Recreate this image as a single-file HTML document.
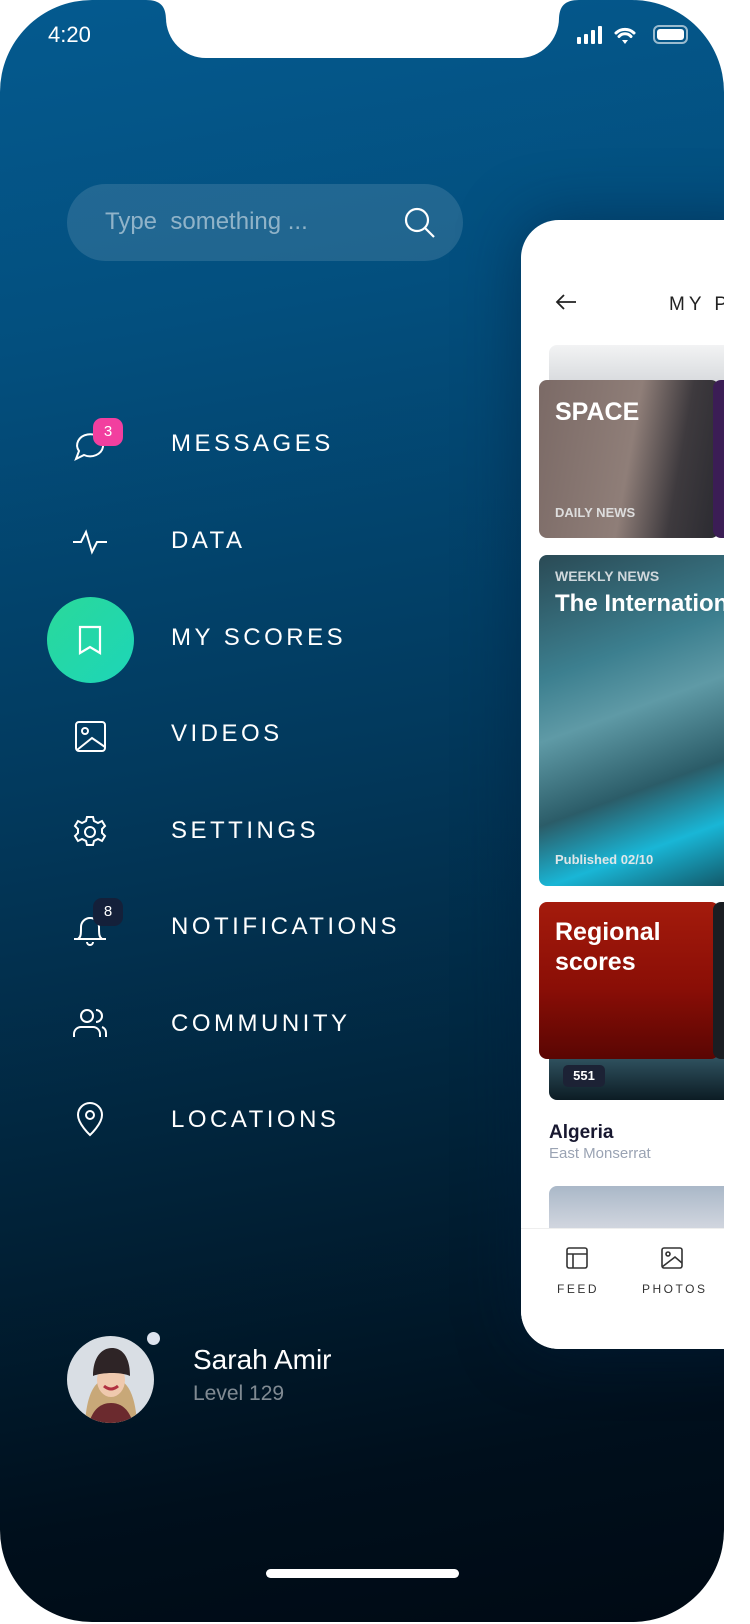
<!DOCTYPE html>
<html><head><meta charset="utf-8"><style>
*{margin:0;padding:0;box-sizing:border-box}
body{width:750px;height:1624px;background:#fff;position:relative;overflow:hidden;font-family:"Liberation Sans",sans-serif}
.phone{position:absolute;left:0;top:0;width:724px;height:1622px;border-radius:92px;overflow:hidden;background:linear-gradient(170deg,#045a8f 0%,#034f7e 20%,#023a5e 45%,#012238 70%,#000f1c 88%,#000a14 100%)}
.notch{position:absolute;left:166px;top:-1px;width:393px;height:59px;background:#fff;border-radius:0 0 40px 40px}
.time{position:absolute;left:48px;top:22px;color:#fff;font-size:22px}
.search{position:absolute;left:67px;top:184px;width:396px;height:77px;border-radius:39px;background:rgba(255,255,255,0.12)}
.search span{position:absolute;left:38px;top:24px;color:rgba(255,255,255,0.5);font-size:24px}
.item{position:absolute;left:171px;color:#fff;font-size:24px;letter-spacing:3.5px}
.ic{position:absolute;left:72px;width:36px;height:36px}
.badge{position:absolute;width:30px;height:28px;border-radius:9px;color:#fff;font-size:15px;text-align:center;line-height:28px}
.panel{position:absolute;left:521px;top:220px;width:260px;height:1129px;background:#fff;border-radius:38px;box-shadow:0 0 60px rgba(0,30,60,0.5);overflow:hidden}
.card{position:absolute;border-radius:8px;overflow:hidden}
.ct{position:absolute;color:#fff;font-weight:bold}
</style></head><body>
<div class="phone">
<div class="notch"></div>
<svg style="position:absolute;left:146px;top:0" width="433" height="20" viewBox="0 0 433 20"><path d="M0 0h20v20C20 6 14 0 0 0z" fill="#fff"/><path d="M433 0h-20v20C413 6 419 0 433 0z" fill="#fff"/></svg>
<div class="time">4:20</div>
<svg style="position:absolute;left:577px;top:24px" width="112" height="22" viewBox="0 0 112 22">
<rect x="0" y="13" width="4" height="7" rx="1" fill="#fff"/><rect x="7" y="10" width="4" height="10" rx="1" fill="#fff"/><rect x="14" y="6" width="4" height="14" rx="1" fill="#fff"/><rect x="21" y="2" width="4" height="18" rx="1" fill="#fff"/>
<path d="M39 9a13 13 0 0 1 18 0M42 12.5a8 8 0 0 1 12 0" stroke="#fff" stroke-width="3" fill="none" stroke-linecap="round"/><path d="M45 16l3 4 3-4z" fill="#fff"/>
<rect x="77" y="2" width="33" height="17" rx="5" fill="none" stroke="rgba(255,255,255,0.6)" stroke-width="2"/><rect x="80" y="5" width="27" height="11" rx="3" fill="#fff"/>
</svg>
<div class="search"><span>Type&nbsp; something ...</span>
<svg style="position:absolute;left:336px;top:22px" width="34" height="34" viewBox="0 0 34 34" fill="none" stroke="#fff" stroke-width="2.2"><circle cx="14" cy="14" r="11"/><path d="M22 22l9 9"/></svg></div>

<svg class="ic" style="top:427px" viewBox="0 0 36 36" fill="none" stroke="#fff" stroke-width="2"><path d="M4 32l3-8a13 11 0 1 1 5 4z"/></svg>
<div class="badge" style="left:93px;top:418px;background:#f23f9f">3</div>
<div class="item" style="top:430px">MESSAGES</div>

<svg class="ic" style="top:524px" viewBox="0 0 36 36" fill="none" stroke="#fff" stroke-width="2"><path d="M1 18h8l5-10 6 20 5-10h10"/></svg>
<div class="item" style="top:527px">DATA</div>

<div style="position:absolute;left:47px;top:597px;width:87px;height:86px;border-radius:50%;background:linear-gradient(135deg,#2ad89a,#1dd6b8)"></div>
<svg class="ic" style="top:622px" viewBox="0 0 36 36" fill="none" stroke="#fff" stroke-width="2.2"><path d="M8 5h20v26l-10-6-10 6z"/></svg>
<div class="item" style="top:624px">MY SCORES</div>

<svg class="ic" style="top:718px" viewBox="0 0 36 36" fill="none" stroke="#fff" stroke-width="2"><rect x="4" y="4" width="29" height="29" rx="3"/><circle cx="13" cy="13" r="3"/><path d="M5 32l15-12 13 9"/></svg>
<div class="item" style="top:720px">VIDEOS</div>

<svg class="ic" style="top:814px" viewBox="0 0 36 36" fill="none" stroke="#fff" stroke-width="2"><circle cx="18" cy="18" r="5"/><path d="M15 3h6l1 4 4 2 4-2 3 5-3 3v4l3 3-3 5-4-2-4 2-1 4h-6l-1-4-4-2-4 2-3-5 3-3v-4l-3-3 3-5 4 2 4-2z"/></svg>
<div class="item" style="top:817px">SETTINGS</div>

<svg class="ic" style="top:910px" viewBox="0 0 36 36" fill="none" stroke="#fff" stroke-width="2"><path d="M2 29h32M6 29c3-2 3-5 3-12a9 9 0 0 1 18 0c0 7 0 10 3 12M15 32a3 3 0 0 0 6 0"/></svg>
<div class="badge" style="left:93px;top:898px;background:#14203a">8</div>
<div class="item" style="top:913px">NOTIFICATIONS</div>

<svg class="ic" style="top:1006px" viewBox="0 0 36 36" fill="none" stroke="#fff" stroke-width="2"><circle cx="15" cy="10" r="6"/><path d="M2 31v-3a7 7 0 0 1 7-7h12a7 7 0 0 1 7 7v3M24 4a6 6 0 0 1 0 12M30 21a6 6 0 0 1 4 6v4"/></svg>
<div class="item" style="top:1010px">COMMUNITY</div>

<svg class="ic" style="top:1101px" viewBox="0 0 36 36" fill="none" stroke="#fff" stroke-width="2"><path d="M18 34s-12-11-12-20a12 12 0 0 1 24 0c0 9-12 20-12 20z"/><circle cx="18" cy="14" r="4"/></svg>
<div class="item" style="top:1106px">LOCATIONS</div>

<svg style="position:absolute;left:67px;top:1336px" width="87" height="87" viewBox="0 0 87 87">
<defs><clipPath id="c"><circle cx="43.5" cy="43.5" r="43.5"/></clipPath></defs>
<g clip-path="url(#c)"><rect width="87" height="87" fill="#d9dee4"/>
<path d="M18 87c2-30 10-45 26-45s24 15 26 45z" fill="#c8a878"/>
<path d="M22 87c4-14 12-20 22-20s18 6 22 20z" fill="#6b2a2e"/>
<ellipse cx="44" cy="44" rx="14" ry="17" fill="#efc9ae"/>
<path d="M26 40c0-18 8-28 19-28s18 10 18 28c-8-4-28-4-37 0z" fill="#2e2426"/>
<path d="M37 50q7 6 14 0" stroke="#b03040" stroke-width="3" fill="none"/></g></svg>
<div style="position:absolute;left:147px;top:1332px;width:13px;height:13px;border-radius:50%;background:#dde3ee"></div>
<div style="position:absolute;left:193px;top:1344px;color:#fff;font-size:28px">Sarah Amir</div>
<div style="position:absolute;left:193px;top:1382px;color:rgba(255,255,255,0.5);font-size:21px">Level 129</div>
<div style="position:absolute;left:266px;top:1569px;width:193px;height:9px;border-radius:5px;background:#fff"></div>

<div class="panel">
<svg style="position:absolute;left:34px;top:74px" width="22" height="16" viewBox="0 0 22 16" fill="none" stroke="#222" stroke-width="1.8"><path d="M21 8H2M9 1L2 8l7 7"/></svg>
<div style="position:absolute;left:148px;top:74px;font-size:19px;letter-spacing:4px;color:#222">MY P</div>
<div class="card" style="left:28px;top:125px;width:230px;height:60px;background:linear-gradient(#f2f3f4,#c9ccd0)"></div>
<div class="card" style="left:18px;top:160px;width:180px;height:158px;background:linear-gradient(100deg,#7b6a66,#8f7e78 50%,#3e3a3e 75%,#2a2a30)"></div>
<div class="card" style="left:192px;top:160px;width:80px;height:158px;background:#3b1d55"></div>
<div class="ct" style="left:34px;top:178px;font-size:25px">SPACE</div>
<div class="ct" style="left:34px;top:285px;font-size:13px;color:#ddd">DAILY NEWS</div>
<div class="card" style="left:18px;top:335px;width:240px;height:331px;background:linear-gradient(160deg,#2a4a55,#3c7f8f 30%,#5f9aa6 45%,#2b5c68 65%,#19b6d6 80%,#103c48)"></div>
<div class="ct" style="left:34px;top:348px;font-size:14px;color:#cfd8dc">WEEKLY NEWS</div>
<div class="ct" style="left:34px;top:370px;font-size:24px;white-space:nowrap">The International</div>
<div class="ct" style="left:34px;top:632px;font-size:13px;color:#e0e6e8">Published 02/10</div>
<div class="card" style="left:28px;top:820px;width:230px;height:60px;background:linear-gradient(#3e6878,#0c1c24)"></div>
<div style="position:absolute;left:42px;top:845px;width:42px;height:22px;border-radius:5px;background:#1c2235;color:#fff;font-size:13px;font-weight:bold;line-height:22px;text-align:center">551</div>
<div class="card" style="left:18px;top:682px;width:180px;height:157px;background:linear-gradient(#a41b0c,#8a0e06 55%,#5a0603)"></div>
<div class="card" style="left:192px;top:682px;width:80px;height:157px;background:#1a1d22"></div>
<div class="ct" style="left:34px;top:697px;font-size:25px;line-height:30px">Regional<br>scores</div>
<div style="position:absolute;left:28px;top:902px;font-size:19px;font-weight:bold;color:#181830">Algeria</div>
<div style="position:absolute;left:28px;top:925px;font-size:15px;color:#9aa3b3">East Monserrat</div>
<div class="card" style="left:28px;top:966px;width:230px;height:50px;background:linear-gradient(#aab8c8,#d8dbe3)"></div>
<div style="position:absolute;left:0;top:1008px;width:260px;height:121px;background:#fff;border-top:1px solid #eee"></div>
<svg style="position:absolute;left:45px;top:1027px" width="22" height="22" viewBox="0 0 22 22" fill="none" stroke="#333" stroke-width="1.6"><rect x="1" y="1" width="20" height="20" rx="2"/><path d="M1 7h20M7 7v14"/></svg>
<svg style="position:absolute;left:140px;top:1027px" width="22" height="22" viewBox="0 0 22 22" fill="none" stroke="#333" stroke-width="1.6"><rect x="1" y="1" width="20" height="20" rx="2"/><circle cx="7" cy="7" r="2"/><path d="M1 20l13-10 7 6"/></svg>
<div style="position:absolute;left:36px;top:1062px;font-size:12px;letter-spacing:2.5px;color:#333">FEED</div>
<div style="position:absolute;left:121px;top:1062px;font-size:12px;letter-spacing:2.5px;color:#333">PHOTOS</div>
</div>
</div>
</body></html>
